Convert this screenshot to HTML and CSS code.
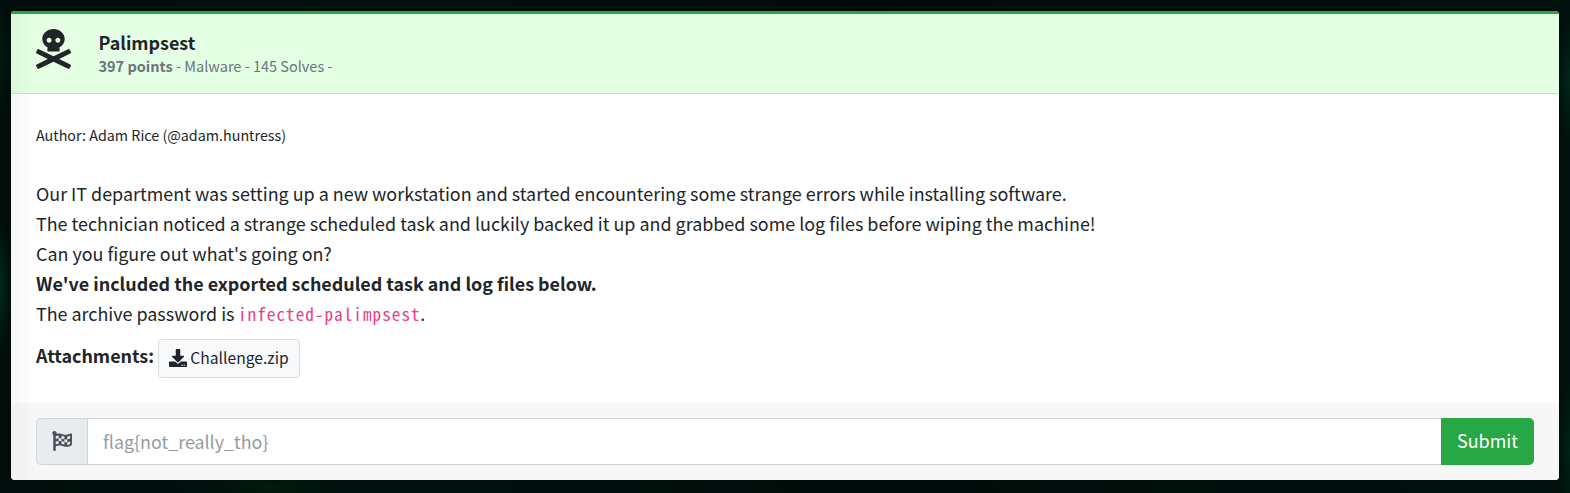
FILE: index.html
```html
<!DOCTYPE html>
<html lang="en">
<head>
<meta charset="utf-8">
<title>Palimpsest</title>
<link rel="stylesheet" href="styles.css">
</head>
<body>
<main class="card">
  <header class="card-header">
    <svg class="skull" viewBox="0 0 448 512"><path fill="currentColor" d="M439.15 453.06L297.17 384l141.99-69.06c7.9-3.95 11.11-13.56 7.15-21.46L432 264.85c-3.95-7.9-13.56-11.11-21.47-7.16L224 348.41 37.47 257.69c-7.9-3.95-17.51-.75-21.47 7.16L1.69 293.48c-3.95 7.9-.75 17.51 7.15 21.46L150.83 384 8.85 453.06c-7.9 3.95-11.11 13.56-7.15 21.47l14.31 28.63c3.95 7.9 13.56 11.11 21.47 7.15L224 419.59l186.53 90.72c7.9 3.95 17.51.75 21.47-7.15l14.31-28.63c3.95-7.91.74-17.52-7.16-21.47zM150 237.28l-5.48 25.87c-2.67 12.62 5.42 24.85 16.45 24.85h126.08c11.03 0 19.12-12.23 16.45-24.85l-5.5-25.87c41.78-22.41 70-62.75 70-109.28C368 57.31 303.53 0 224 0S80 57.31 80 128c0 46.53 28.21 86.87 70 109.28zM280 112c17.65 0 32 14.35 32 32s-14.35 32-32 32-32-14.35-32-32 14.35-32 32-32zm-112 0c17.65 0 32 14.35 32 32s-14.35 32-32 32-32-14.35-32-32 14.35-32 32-32z"/></svg>
    <div class="heading">
      <div class="title"><span>Palimpsest</span></div>
      <div class="meta"><span><b>397 points</b> - Malware - 145 Solves -</span></div>
    </div>
  </header>
  <section class="card-body">
    <div class="author"><span>Author: Adam Rice (@adam.huntress)</span></div>
    <div class="line"><span>Our IT department was setting up a new workstation and started encountering some strange errors while installing software.</span></div>
    <div class="line"><span>The technician noticed a strange scheduled task and luckily backed it up and grabbed some log files before wiping the machine!</span></div>
    <div class="line"><span>Can you figure out what's going on?</span></div>
    <div class="line"><b>We've included the exported scheduled task and log files below.</b></div>
    <div class="line"><span>The archive password is <code>infected-palimpsest</code>.</span></div>
    <div class="attachments">
      <b>Attachments:</b>
      <a class="file"><svg class="download" viewBox="0 0 512 512"><path fill="currentColor" d="M216 0h80c13.3 0 24 10.7 24 24v168h87.7c17.8 0 26.7 21.5 14.1 34.1L269.7 378.3c-7.5 7.5-19.8 7.5-27.3 0L90.1 226.1c-12.6-12.6-3.7-34.1 14.1-34.1H192V24c0-13.3 10.7-24 24-24zm296 376v112c0 13.3-10.7 24-24 24H24c-13.3 0-24-10.7-24-24V376c0-13.3 10.7-24 24-24h146.7l49 49c20.1 20.1 52.5 20.1 72.6 0l49-49H488c13.3 0 24 10.7 24 24zm-124 88c0-11-9-20-20-20s-20 9-20 20 9 20 20 20 20-9 20-20zm64 0c0-11-9-20-20-20s-20 9-20 20 9 20 20 20 20-9 20-20z"/></svg><span>Challenge.zip</span></a>
    </div>
  </section>
  <footer class="card-footer">
    <div class="addon"><svg class="flag" viewBox="0 0 512 512"><path fill="currentColor" d="M243.2 189.9V258c26.1 5.9 49.3 15.6 73.6 22.3v-68.2c-26-5.8-49.4-15.5-73.6-22.2zm223.3-123c-34.3 15.9-76.5 31.9-117 31.9C296 98.8 251.7 64 184.3 64c-25 0-47.3 4.4-68 12 2.8-7.3 4.1-15.2 3.6-23.6C118.1 24 94.8 1.2 66.3 0 34.3-1.3 8 24.3 8 56c0 19 9.5 35.8 24 45.9V488c0 13.3 10.7 24 24 24h16c13.3 0 24-10.7 24-24v-94.4c28.3-12.1 63.6-22.1 114.4-22.1 53.6 0 97.8 34.8 165.2 34.8 48.2 0 86.7-16.3 122.5-40.9 8.7-6 13.8-15.8 13.8-26.4V95.9c.1-23.3-24.2-38.8-45.4-29zM169.6 325.5c-25.8 2.7-50 8.2-73.6 16.6v-70.5c26.2-9.3 47.5-15 73.6-17.4v71.3zM464 191c-23.6 9.8-46.3 19.5-73.6 23.9V286c24.8-3.4 51.4-11.8 73.6-26v70.5c-25.1 16.1-48.5 24.7-73.6 27.1V286c-27 3.7-47.9 1.5-73.6-5.6v67.4c-23.9-7.4-47.3-16.7-73.6-21.3V258c-19.7-4.4-40.8-6.8-73.6-3.8v-70c-22.4 3.1-44.6 10.2-73.6 20.9v-70.5c33.2-12.2 50.1-19.8 73.6-22v71.6c27-3.7 48.4-1.3 73.6 5.7v-67.4c23.7 7.4 47.2 16.7 73.6 21.3v68.4c23.7 5.3 47.6 6.9 73.6 2.7V143c27-4.8 52.3-13.6 73.6-22.5z"/></svg></div>
    <input class="answer" type="text" placeholder="flag{not_really_tho}">
    <button class="submit">Submit</button>
  </footer>
</main>
</body>
</html>
```
FILE: styles.css
```css
* { box-sizing: border-box; }
body {
  margin: 0;
  height: 493px;
  padding: 11px 11px 13px;
  overflow: hidden;
  background:
    radial-gradient(ellipse 12px 70px at 0 285px, #00291e, transparent),
    radial-gradient(ellipse 12px 60px at 0 55px, #001b13, transparent),
    radial-gradient(ellipse 12px 60px at 1570px 80px, #002718, transparent),
    radial-gradient(ellipse 12px 70px at 1570px 450px, #002316, transparent),
    radial-gradient(ellipse 60px 12px at 270px 486px, #001c0c, transparent),
    linear-gradient(90deg, #000d0a, #00120e 20%, #000c09 55%, #00110d);
  font: 20px/30px "Noto Sans CJK SC", sans-serif;
  color: #212529;
}
.card {
  display: flex;
  flex-direction: column;
  height: 469px;
  border-radius: 4px;
  overflow: hidden;
  background: linear-gradient(90deg, #f7f7f7, #fff 25px);
}
.card-header {
  display: flex;
  height: 83px;
  padding: 15px 25px 0;
  border-top: 3px solid #28a745;
  border-bottom: 1px solid #c8dfc8;
  background: linear-gradient(90deg, #dcf7dc, #e4ffe4 25px);
}
.skull { width: 35px; height: 40px; }
.heading { padding-left: 27.5px; white-space: nowrap; }
.title { font-weight: 700; font-size: 17.9px; line-height: 30px; margin-top: -2px; }
.meta { font-size: 14.5px; line-height: 18px; color: #6c757d; }
.card-body { flex: 1; padding: 29px 25px 0; white-space: nowrap; }
.author { font-size: 14.32px; line-height: 24px; margin-bottom: 31px; }
.line { height: 30px; font-size: 17.91px; }
code {
  font-family: "Noto Sans Mono CJK SC", "Liberation Mono", monospace;
  font-size: 17.2px;
  letter-spacing: 1.02px;
  line-height: 1;
  margin-left: -.5px;
  margin-right: -.5px;
  color: #e83e8c;
}
.attachments { display: flex; gap: 4.3px; padding-top: 11px; font-size: 17.91px; }
.attachments b { line-height: 32px; }
.file {
  display: flex;
  align-items: center;
  width: 142px;
  height: 39px;
  padding-left: 10px;
  border: 1px solid #dadcdf;
  border-radius: 4px;
  background: #f8f9fa;
  font-size: 15.65px;
}
.file span { margin-top: -2px; }
.download { width: 18px; height: 18px; margin-right: 3px; position: relative; top: -1px; }
.card-footer { display: flex; height: 77px; padding: 15px 25px; background: linear-gradient(90deg, #f0f0f0, #f7f7f7 25px); }
.addon {
  width: 51px;
  padding: 12px 0 0 15px;
  border: 1px solid #ced4da;
  border-right: 0;
  border-radius: 5px 0 0 5px;
  background: #e9ecef;
  color: #495057;
}
.flag { display: block; width: 20px; height: 20px; }
.answer {
  flex: 1;
  min-width: 0;
  padding: 0 15px 2px;
  border: 1px solid #ced4da;
  border-right: 0;
  border-radius: 0;
  background: #fff;
  font: 17.87px "Noto Sans CJK SC", sans-serif;
}
.answer::placeholder { color: #939ba2; opacity: 1; }
.submit {
  width: 93px;
  padding: 0 0 3px;
  border: 0;
  border-radius: 0 5px 5px 0;
  background: #28a745;
  color: #fff;
  font: 18px "Noto Sans CJK SC", sans-serif;
}
```
